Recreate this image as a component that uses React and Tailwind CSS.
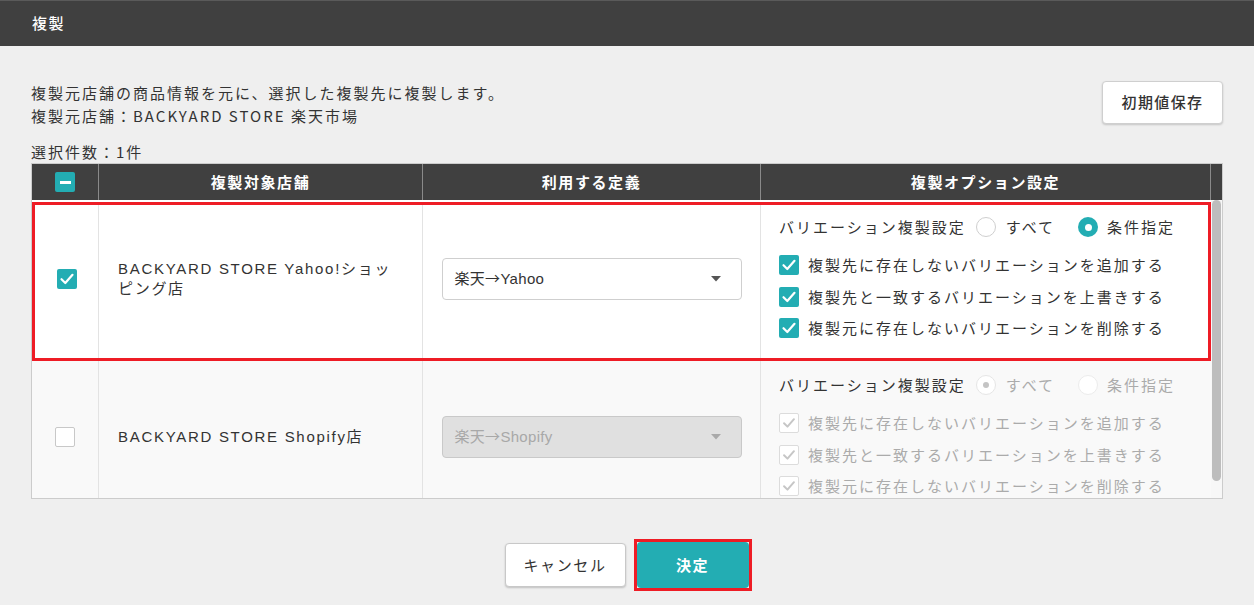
import React from "react";

const TEAL = "bg-[#23adb3]";

function Check({ className = "", color = "white" }) {
  return (
    <svg viewBox="0 0 20 20" className={className} fill="none">
      <path d="M4.5 10.2 L8.3 14 L15.5 5.8" stroke={color} strokeWidth="2.2" strokeLinecap="round" strokeLinejoin="round" />
    </svg>
  );
}

function Box({ state }) {
  if (state === "checked")
    return (
      <span className={`w-5 h-5 rounded-[2px] ${TEAL} flex items-center justify-center shrink-0`}>
        <Check className="w-5 h-5" />
      </span>
    );
  if (state === "disabledChecked")
    return (
      <span className="w-5 h-5 rounded-[2px] bg-white border border-[#dcdcdc] flex items-center justify-center shrink-0">
        <Check className="w-[18px] h-[18px]" color="#c6c6c6" />
      </span>
    );
  return <span className="w-5 h-5 rounded-[2px] bg-white border border-[#c8c8c8] shrink-0 block" />;
}

function Radio({ state }) {
  if (state === "checked")
    return (
      <span className={`w-5 h-5 rounded-full ${TEAL} flex items-center justify-center shrink-0`}>
        <span className="w-[7px] h-[7px] rounded-full bg-white block" />
      </span>
    );
  if (state === "disabledChecked")
    return (
      <span className="w-5 h-5 rounded-full bg-white border border-[#e6e6e6] flex items-center justify-center shrink-0">
        <span className="w-[6px] h-[6px] rounded-full bg-[#c4c4c4] block" />
      </span>
    );
  if (state === "disabled")
    return <span className="w-5 h-5 rounded-full bg-white border border-[#ececec] shrink-0 block" />;
  return <span className="w-5 h-5 rounded-full bg-white border border-[#cfcfcf] shrink-0 block" />;
}

function Options({ disabled, pt, pb }) {
  const txt = disabled ? "text-[#ababab]" : "text-[#333]";
  const items = [
    "複製先に存在しないバリエーションを追加する",
    "複製先と一致するバリエーションを上書きする",
    "複製元に存在しないバリエーションを削除する",
  ];
  return (
    <div className={`flex flex-col pl-[18px] tracking-[2px] ${pt} ${pb}`}>
      <div className="flex items-center h-5 text-[15px] leading-5">
        <span className="text-[#333]">バリエーション複製設定</span>
        <span className="ml-[10px]">
          <Radio state={disabled ? "disabledChecked" : "unchecked"} />
        </span>
        <span className={`ml-[10px] ${txt}`}>すべて</span>
        <span className="ml-[23px]">
          <Radio state={disabled ? "disabled" : "checked"} />
        </span>
        <span className={`ml-[9px] ${txt}`}>条件指定</span>
      </div>
      <div className="flex flex-col gap-[11.5px] mt-[18px]">
        {items.map((t) => (
          <div key={t} className="flex items-center h-5 gap-[9px] text-[15px] leading-5">
            <Box state={disabled ? "disabledChecked" : "checked"} />
            <span className={txt}>{t}</span>
          </div>
        ))}
      </div>
    </div>
  );
}

function Select({ from, to, disabled }) {
  return (
    <div
      className={`w-[300px] h-[42px] shrink-0 rounded-[4px] border flex items-center justify-between pl-[12px] pr-[20px] ${
        disabled ? "bg-[#e0e0e0] border-[#c9c9c9] text-[#a8a8a8]" : "bg-white border-[#cfcfcf] text-[#333]"
      }`}
    >
      <span className="text-[15px] tracking-[0.3px]">
        <span className="font-['Noto_Sans_CJK_JP',sans-serif]">{from}→</span>
        <span className="font-['Liberation_Sans',sans-serif]">{to}</span>
      </span>
      <svg viewBox="0 0 10 6" className="w-[10px] h-[6px]">
        <path d="M0 0 L10 0 L5 5.5 Z" fill={disabled ? "#a9a9a9" : "#555"} />
      </svg>
    </div>
  );
}

function Row({ selected }) {
  const shift = selected ? "pb-[5px]" : "pb-[3px]";
  const cells = (
    <div className="flex">
      <div className={`${selected ? "w-[64px]" : "w-[67px]"} border-r border-[#e3e3e3] flex items-center justify-center ${shift}`}>
        <Box state={selected ? "checked" : "empty"} />
      </div>
      <div className={`w-[324px] border-r border-[#e3e3e3] flex items-center pl-[19px] pr-[19px] ${shift}`}>
        <span className="text-[15px] leading-[20px] tracking-[1.7px] text-[#333] font-['Liberation_Sans','Noto_Sans_CJK_JP',sans-serif]">
          {selected ? "BACKYARD STORE Yahoo!ショッピング店" : "BACKYARD STORE Shopify店"}
        </span>
      </div>
      <div className={`w-[338px] border-r border-[#e3e3e3] flex items-center justify-center ${shift}`}>
        <Select from="楽天" to={selected ? "Yahoo" : "Shopify"} disabled={!selected} />
      </div>
      <div className={selected ? "w-[447px]" : "w-[450px]"}>
        <Options disabled={!selected} pt={selected ? "pt-[12px]" : "pt-[14px]"} pb="pb-[20px]" />
      </div>
    </div>
  );
  if (selected)
    return (
      <div className="bg-white pt-[2px]">
        <div className="border-[3px] border-[#ee1c25]">{cells}</div>
      </div>
    );
  return <div className="bg-[#f9f9f9]">{cells}</div>;
}

export default function App() {
  return (
    <div className="w-[1254px] h-[605px] bg-[#efefef] font-['Noto_Sans_CJK_JP',sans-serif] text-[#333] tracking-[2px] overflow-hidden">
      <div className="h-[46px] bg-[#404040] border-t border-[#5a5a5a] flex items-center px-[32px]">
        <span className="text-white text-[15px] font-medium tracking-[1.6px]">複製</span>
      </div>

      <div className="px-[31px]">
        <div className="flex justify-between pt-[35px]">
          <div className="text-[15px] leading-[23px]">
            <div>複製元店舗の商品情報を元に、選択した複製先に複製します。</div>
            <div>複製元店舗：BACKYARD STORE 楽天市場</div>
          </div>
          <button className="w-[121px] h-[43px] bg-white border border-[#cfcfcf] rounded-[4px] shadow-[0_1px_2px_rgba(0,0,0,0.18)] text-[15px] text-[#333] tracking-[1.4px] font-medium">
            初期値保存
          </button>
        </div>
        <div className="text-[15px] leading-[23px] mt-[13px]">選択件数：1件</div>

        <div className="border border-[#cccccc] w-[1192px]">
          <div className="flex h-[36px] bg-[#404040] text-white text-[15px] font-bold tracking-[1.6px]">
            <div className="w-[67px] border-r border-[#8a8a8a] flex items-center justify-center">
              <span className={`w-5 h-5 rounded-[2px] ${TEAL} flex items-center justify-center`}>
                <span className="w-[11px] h-[3px] bg-white block" />
              </span>
            </div>
            <div className="w-[324px] border-r border-[#8a8a8a] flex items-center justify-center">複製対象店舗</div>
            <div className="w-[338px] border-r border-[#8a8a8a] flex items-center justify-center">利用する定義</div>
            <div className="w-[450px] border-r border-[#8a8a8a] flex items-center justify-center">複製オプション設定</div>
            <div className="flex-1" />
          </div>
          <div className="flex h-[298px]">
            <div className="w-[1179px] overflow-hidden">
              <Row selected />
              <Row />
            </div>
            <div className="flex-1 bg-[#f7f7f7] flex flex-col items-center">
              <div className="w-[9px] h-[281px] rounded-full bg-[#bdbdbd]" />
            </div>
          </div>
        </div>

        <div className="flex justify-center items-center gap-[8px] mt-[40px] pl-[2px]">
          <button className="w-[121px] h-[44px] bg-white border border-[#c8c8c8] rounded-[4px] shadow-[0_1px_2px_rgba(0,0,0,0.2)] text-[15px] text-[#333] tracking-[1.6px]">
            キャンセル
          </button>
          <div className="border-[3px] border-[#ee1c25] w-[118px] h-[52px]">
            <button className={`w-full h-full rounded-[4px] ${TEAL} text-white text-[15px] font-bold tracking-[1.6px]`}>
              決定
            </button>
          </div>
        </div>
      </div>
    </div>
  );
}
